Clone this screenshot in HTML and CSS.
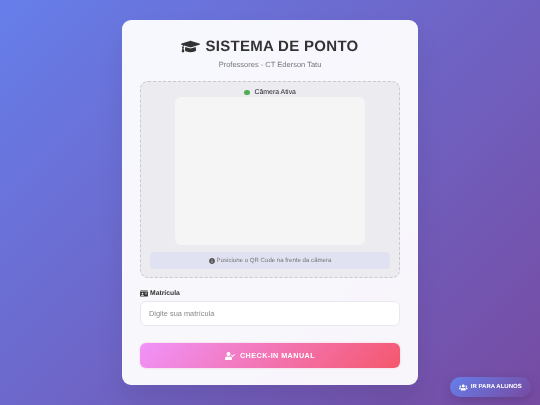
FILE: index.html
```html
<!DOCTYPE html>
<html lang="pt-BR">
<head>
<meta charset="UTF-8">
<meta name="viewport" content="width=device-width, initial-scale=1.0">
<title>Sistema de Ponto</title>
<link rel="stylesheet" href="styles.css">
</head>
<body>
<div class="card">
  <div class="header">
    <h1>
      <svg class="cap" viewBox="0 0 640 512"><path d="M622.34 153.2L343.4 67.5c-15.2-4.67-31.6-4.67-46.79 0L17.66 153.2c-23.54 7.23-23.54 38.36 0 45.59l48.63 14.94c-10.67 13.19-17.23 29.28-17.88 46.9C38.78 266.15 32 276.11 32 288c0 10.78 5.68 19.85 13.86 25.65L20.33 428.53C18.11 438.52 25.71 448 35.94 448h56.11c10.24 0 17.84-9.48 15.62-19.47L82.14 313.65C90.32 307.85 96 298.78 96 288c0-11.57-6.47-21.25-15.66-26.87.76-15.02 8.44-28.3 20.69-36.72L296.6 284.5c9.06 2.78 26.44 6.25 46.79 0l278.95-85.7c23.55-7.24 23.55-38.36 0-45.6zM352.79 315.09c-28.53 8.76-52.84 3.92-65.59 0l-145.02-44.55L128 384c0 35.35 85.96 64 192 64s192-28.65 192-64l-14.18-113.47-145.03 44.56z"/></svg>
      SISTEMA DE PONTO
    </h1>
    <p>Professores - CT Ederson Tatu</p>
  </div>

  <div class="scanner">
    <div class="status"><span class="dot"></span>Câmera Ativa</div>
    <div class="video"></div>
    <div class="hint">
      <svg class="hint-icon" viewBox="0 0 512 512"><path d="M256 8C119.043 8 8 119.083 8 256c0 136.997 111.043 248 248 248s248-111.003 248-248C504 119.083 392.957 8 256 8zm0 110c23.196 0 42 18.804 42 42s-18.804 42-42 42-42-18.804-42-42 18.804-42 42-42zm56 254c0 6.627-5.373 12-12 12h-88c-6.627 0-12-5.373-12-12v-24c0-6.627 5.373-12 12-12h12v-64h-12c-6.627 0-12-5.373-12-12v-24c0-6.627 5.373-12 12-12h64c6.627 0 12 5.373 12 12v100h12c6.627 0 12 5.373 12 12v24z"/></svg>
      Posicione o QR Code na frente da câmera
    </div>
  </div>

  <label class="field-label" for="matricula">
    <svg class="id-icon" viewBox="0 0 576 512"><path d="M528 32H48C21.5 32 0 53.5 0 80v16h576V80c0-26.5-21.5-48-48-48zM0 432c0 26.5 21.5 48 48 48h480c26.5 0 48-21.5 48-48V128H0v304zm352-232c0-4.4 3.6-8 8-8h144c4.4 0 8 3.6 8 8v16c0 4.4-3.6 8-8 8H360c-4.4 0-8-3.6-8-8v-16zm0 64c0-4.4 3.6-8 8-8h144c4.4 0 8 3.6 8 8v16c0 4.4-3.6 8-8 8H360c-4.4 0-8-3.6-8-8v-16zm0 64c0-4.4 3.6-8 8-8h144c4.4 0 8 3.6 8 8v16c0 4.4-3.6 8-8 8H360c-4.4 0-8-3.6-8-8v-16zM176 192c35.3 0 64 28.7 64 64s-28.7 64-64 64-64-28.7-64-64 28.7-64 64-64zM67.1 396.2C75.5 370.5 99.6 352 128 352h8.2c12.3 5.1 25.7 8 39.8 8s27.6-2.9 39.8-8h8.2c28.4 0 52.5 18.5 60.9 44.2 3.2 9.9-5.2 19.8-15.6 19.8H82.7c-10.4 0-18.8-10-15.6-19.8z"/></svg>
    Matrícula
  </label>
  <input class="field" id="matricula" type="text" placeholder="Digite sua matrícula">

  <button class="checkin" type="button">
    <svg class="check-icon" viewBox="0 0 640 512"><path d="M224 256c70.7 0 128-57.3 128-128S294.7 0 224 0 96 57.3 96 128s57.3 128 128 128zm89.6 32h-16.7c-22.2 10.2-46.9 16-72.9 16s-50.6-5.8-72.9-16h-16.7C60.2 288 0 348.2 0 422.4V464c0 26.5 21.5 48 48 48h352c26.5 0 48-21.5 48-48v-41.6c0-74.2-60.2-134.4-134.4-134.4zm323-128.4l-27.8-28.1c-4.6-4.7-12.1-4.7-16.8-.1l-104.8 104-45.5-45.8c-4.6-4.7-12.1-4.7-16.8-.1l-28.1 27.9c-4.7 4.6-4.7 12.1-.1 16.8l81.7 82.3c4.6 4.7 12.1 4.7 16.8.1l141.3-140.2c4.6-4.7 4.7-12.2.1-16.8z"/></svg>
    CHECK-IN MANUAL
  </button>
</div>

<a class="float-btn" href="#">
  <svg class="users-icon" viewBox="0 0 640 512"><path d="M96 224c35.3 0 64-28.7 64-64s-28.7-64-64-64-64 28.7-64 64 28.7 64 64 64zm448 0c35.3 0 64-28.7 64-64s-28.7-64-64-64-64 28.7-64 64 28.7 64 64 64zm32 32h-64c-17.6 0-33.5 7.1-45.1 18.6 40.3 22.1 68.9 62 75.1 109.4h66c17.7 0 32-14.3 32-32v-32c0-35.3-28.7-64-64-64zm-256 0c61.9 0 112-50.1 112-112S381.9 32 320 32 208 82.1 208 144s50.1 112 112 112zm76.8 32h-8.3c-20.8 10-43.9 16-68.5 16s-47.6-6-68.5-16h-8.3C179.6 288 128 339.6 128 403.2V432c0 26.5 21.5 48 48 48h288c26.5 0 48-21.5 48-48v-28.8c0-63.6-51.6-115.2-115.2-115.2zm-223.7-13.4C161.5 263.1 145.6 256 128 256H64c-35.3 0-64 28.7-64 64v32c0 17.7 14.3 32 32 32h65.9c6.3-47.4 34.9-87.3 75.2-109.4z"/></svg>
  IR PARA ALUNOS
</a>
</body>
</html>
```

FILE: styles.css
```css
* {
  box-sizing: border-box;
}

html,
body {
  height: 100%;
}

body {
  margin: 0;
  font-family: "Liberation Sans", Arial, sans-serif;
  text-rendering: geometricPrecision;
  background: linear-gradient(135deg, #667eea 0%, #764ba2 100%);
  display: flex;
  align-items: center;
  justify-content: center;
  overflow: hidden;
}

.card {
  width: 296px;
  height: 365px;
  padding: 16px 18px 0;
  background: rgba(255, 255, 255, 0.95);
  border-radius: 9px;
  box-shadow: 0 15px 26px rgba(0, 0, 0, 0.08);
  will-change: transform;
}

.header {
  text-align: center;
  margin-bottom: 11px;
}

.header h1 {
  margin: 0;
  display: flex;
  align-items: center;
  justify-content: center;
  gap: 5px;
  font-size: 15px;
  line-height: 21px;
  letter-spacing: 0.3px;
  color: #333;
}

.cap {
  width: 19px;
  height: 15px;
  fill: #333;
}

.header p {
  margin: 2px 0 0;
  font-size: 7.5px;
  line-height: 11px;
  color: #777;
}

.scanner {
  height: 197px;
  padding: 6px 9px 0;
  display: flex;
  flex-direction: column;
  align-items: center;
  background: #ebebf0;
  border: 1px dashed #c9c9ce;
  border-radius: 8px;
}

.status {
  display: flex;
  align-items: center;
  font-size: 6.9px;
  line-height: 9px;
  color: #222;
}

.dot {
  width: 5.5px;
  height: 5.5px;
  margin-right: 5px;
  border-radius: 50%;
  background: #4caf50;
}

.video {
  width: 190px;
  height: 148px;
  background: #f5f5f5;
  border-radius: 6px;
}

.hint {
  width: 100%;
  height: 17px;
  margin-top: 7px;
  display: flex;
  align-items: center;
  justify-content: center;
  gap: 2px;
  font-size: 6.1px;
  color: #777;
  background: #e0e2f1;
  border-radius: 4px;
}

.hint-icon {
  width: 6px;
  height: 6px;
  fill: #555;
}

.field-label {
  margin-top: 11px;
  display: flex;
  align-items: center;
  gap: 2px;
  font-size: 6.8px;
  line-height: 9px;
  font-weight: bold;
  color: #333;
}

.id-icon {
  width: 8px;
  height: 7px;
  fill: #333;
}

.field {
  display: block;
  width: 100%;
  height: 25px;
  margin-top: 3px;
  padding: 0 8px;
  font-family: inherit;
  font-size: 7.4px;
  background: #fff;
  border: 1px solid #e8e8f0;
  border-radius: 6px;
  outline: none;
}

.field::placeholder {
  color: #888;
}

.checkin {
  width: 100%;
  height: 25px;
  margin-top: 17px;
  display: flex;
  align-items: center;
  justify-content: center;
  gap: 5px;
  font-family: inherit;
  font-size: 7.2px;
  font-weight: bold;
  letter-spacing: 0.45px;
  color: #fff;
  background: linear-gradient(135deg, #f093fb 0%, #f5576c 100%);
  border: 0;
  border-radius: 6px;
  box-shadow: 0 0 2px rgba(245, 87, 108, 0.3);
}

.check-icon {
  width: 10px;
  height: 8px;
  fill: #fff;
}

.float-btn {
  position: fixed;
  right: 9px;
  bottom: 8px;
  width: 81px;
  height: 20px;
  display: flex;
  align-items: center;
  justify-content: center;
  gap: 3px;
  font-size: 6px;
  font-weight: bold;
  color: #fff;
  text-decoration: none;
  background: linear-gradient(135deg, #667eea 0%, #764ba2 100%);
  border-radius: 15px;
  box-shadow: 0 3px 11px rgba(0, 0, 0, 0.15);
  will-change: transform;
}

.users-icon {
  width: 8.5px;
  height: 7px;
  fill: #fff;
}
```
